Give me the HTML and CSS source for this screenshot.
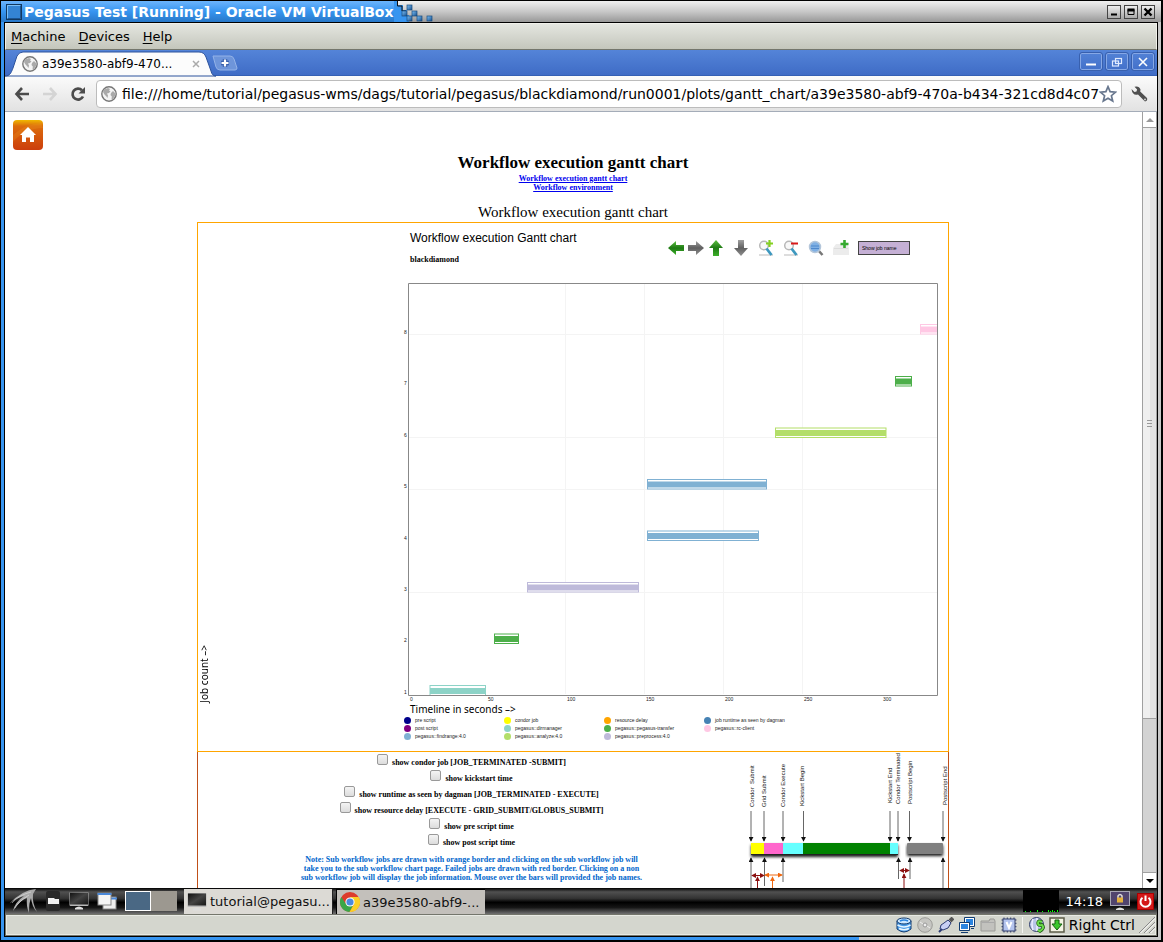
FILE: index.html
```html
<!DOCTYPE html>
<html lang="en">
<head>
<meta charset="utf-8">
<title>Pegasus Test [Running] - Oracle VM VirtualBox</title>
<link rel="stylesheet" href="styles.css">
</head>
<body>
<svg class="defs" width="0" height="0" aria-hidden="true">
  <defs>
    <linearGradient id="gGreen" x1="0" y1="0" x2="0" y2="1"><stop offset="0" stop-color="#5cc040"/><stop offset=".5" stop-color="#1f7a14"/><stop offset="1" stop-color="#3cb028"/></linearGradient>
    <linearGradient id="gGray" x1="0" y1="0" x2="0" y2="1"><stop offset="0" stop-color="#a0a0a0"/><stop offset=".5" stop-color="#606060"/><stop offset="1" stop-color="#909090"/></linearGradient>
    <linearGradient id="gHome" x1="0" y1="0" x2="0" y2="1"><stop offset="0" stop-color="#f0b800"/><stop offset=".2" stop-color="#dc6c0c"/><stop offset="1" stop-color="#cc3e0c"/></linearGradient>
    <linearGradient id="gScreen" x1="0" y1="0" x2="1" y2="1"><stop offset="0" stop-color="#111"/><stop offset=".5" stop-color="#444"/><stop offset="1" stop-color="#161616"/></linearGradient>
    <linearGradient id="gTile" x1="0" y1="0" x2="1" y2="1"><stop offset="0" stop-color="#7cc0f8"/><stop offset="1" stop-color="#164f8c"/></linearGradient>
    <symbol id="globe" viewBox="0 0 16 16"><circle cx="8" cy="8" r="7.2" fill="#f4f4f4" stroke="#777" stroke-width="1.4"/><path d="M3 3.5 7 2l2 1-1 1.5 1.5.8L8 7 6 7.500 7 9.500 6.500 12 5 10 3.500 8.500 2 6zM10 7l2-2 2 2v3l-2 3-1.500.5.3-3L9.500 9z" fill="#aaa"/></symbol>
    <symbol id="monitor" viewBox="0 0 20 20"><path d="M6 17q4-3 8 0v1.500H6z" fill="#ddd"/><rect x=".5" y="1" width="19" height="14" rx="1" fill="#b8b8b8"/><rect x="1" y="1.500" width="18" height="12" fill="url(#gScreen)"/></symbol>
  </defs>
</svg>
<div class="window">
  <header class="titlebar">
    <div class="title-left">
      <svg width="16" height="16" viewBox="0 0 16 16" aria-hidden="true"><rect x=".5" y=".5" width="15" height="15" fill="#3484d4" stroke="#12385f"/><path d="M1.500 14V1.500H14" fill="none" stroke="#7cc0f8"/><path d="M14.500 2v12.500H2" fill="none" stroke="#1c5490"/></svg>
      <h1 class="title">Pegasus Test [Running] - Oracle VM VirtualBox</h1>
    </div>
    <svg class="tiles" width="42" height="21" viewBox="0 0 42 21" aria-hidden="true">
      <path d="M0 0H3L4 4h5v5h4v5h2v7H0z" fill="#3795f0"/>
      <path d="M3.500 0v5H8v5h4v5" fill="none" stroke="#111" stroke-width="1"/>
      <g fill="url(#gTile)" stroke="#174a7c" stroke-width=".7"><rect x="13" y="4" width="5" height="5"/><rect x="8" y="10" width="5" height="5"/><rect x="18" y="10" width="5" height="5"/><rect x="13" y="15" width="5" height="5"/><rect x="23" y="15" width="5" height="5"/><rect x="33" y="15" width="5" height="5"/></g>
    </svg>
    <div class="win-buttons">
      <button class="wbtn" aria-label="Minimize"><svg viewBox="0 0 12 12"><path d="M3 8.500h6" stroke="#000" stroke-width="2"/></svg></button>
      <button class="wbtn" aria-label="Maximize"><svg viewBox="0 0 12 12"><path d="M3 3.500h6v5H3z" fill="none" stroke="#000"/><path d="M2.500 4h7" stroke="#000" stroke-width="3"/></svg></button>
      <button class="wbtn" aria-label="Close"><svg viewBox="0 0 12 12"><path d="M2.500 2.500l7 7M9.500 2.500l-7 7" stroke="#000" stroke-width="2.400"/></svg></button>
    </div>
  </header>
  <div class="screen">
    <nav class="menubar">
      <button><u>M</u>achine</button><button><u>D</u>evices</button><button><u>H</u>elp</button>
    </nav>
    <div class="tabstrip">
      <div class="tab">
        <svg class="tab-shape" width="208" height="25" viewBox="0 0 208 25" aria-hidden="true"><path d="M0 25C5 25 6 22 8 17L12 5Q14 1 18 1H194Q199 1 201 6L206 20Q207 25 211 25z" fill="#fcfcfc" stroke="#2c529c"/></svg>
        <svg class="i16" aria-hidden="true"><use href="#globe"/></svg>
        <span class="tab-text">a39e3580-abf9-470...</span>
        <button class="tab-close" aria-label="Close tab"><svg width="8" height="8" viewBox="0 0 8 8"><path d="M1 1l6 6M7 1L1 7" stroke="#aaa" stroke-width="1.500"/></svg></button>
      </div>
      <button class="newtab" aria-label="New tab"><svg width="26" height="16" viewBox="0 0 26 16"><path d="M1 1H18Q21 1 22 4l3 9q0 2-2 2H8Q5 15 4 12z" fill="#6e95da" stroke="#94b3e8"/><path d="M13 4v8M9 8h8" stroke="#3a62ae" stroke-width="4.500"/><path d="M13 4.500v7M9.500 8h7" stroke="#fff" stroke-width="2.200"/></svg></button>
      <div class="cbtns">
        <button class="cbtn" aria-label="Minimize browser"><svg width="20" height="14" viewBox="0 0 20 14"><path d="M5 9.500h10" stroke="#fff" stroke-width="2"/></svg></button>
        <button class="cbtn" aria-label="Restore browser"><svg width="20" height="14" viewBox="0 0 20 14" fill="none" stroke="#e0eaff" stroke-width="1.200"><rect x="8.500" y="3.500" width="6" height="5"/><rect x="5.500" y="6" width="6" height="5"/></svg></button>
        <button class="cbtn" aria-label="Close browser"><svg width="20" height="14" viewBox="0 0 20 14"><path d="M6 3l8 8M14 3l-8 8" stroke="#fff" stroke-width="1.600"/></svg></button>
      </div>
    </div>
    <div class="toolbar">
      <button aria-label="Back"><svg width="16" height="16" viewBox="0 0 16 16" fill="none" stroke="#4c4c4c" stroke-width="2.600"><path d="M8 2L2.500 8 8 14M3 8h12"/></svg></button>
      <button aria-label="Forward"><svg width="16" height="16" viewBox="0 0 16 16" fill="none" stroke="#d4d4d4" stroke-width="2.600"><path d="M8 2l5.500 6L8 14M13 8H1"/></svg></button>
      <button aria-label="Reload"><svg width="16" height="16" viewBox="0 0 16 16"><path d="M12 4.200A5.500 5.500 0 1 0 13 10.500" fill="none" stroke="#4c4c4c" stroke-width="2.700"/><path d="M15 1v6.500H8.500z" fill="#4c4c4c"/></svg></button>
      <div class="omnibox">
        <svg class="i16" aria-hidden="true"><use href="#globe"/></svg>
        <input type="text" aria-label="Address" value="file:///home/tutorial/pegasus-wms/dags/tutorial/pegasus/blackdiamond/run0001/plots/gantt_chart/a39e3580-abf9-470a-b434-321cd8d4c071">
        <button aria-label="Bookmark"><svg width="18" height="18" viewBox="0 0 18 18"><path d="M9 1.700l2.100 5 5.400.5-4.100 3.500 1.300 5.300L9 13.200 4.300 16l1.300-5.300L1.500 7.200l5.400-.5z" fill="#fff" stroke="#68778e" stroke-width="1.700"/></svg></button>
      </div>
      <button aria-label="Settings"><svg width="17" height="16" viewBox="0 0 17 16"><path d="M.5 3l3 3 2-.5.600-2L3.500.8Q8-.5 9.500 3.500l-.3 2L16 12q1 3-2 3.500L7 8.500Q1.500 10 .5 3z" fill="#505050"/><circle cx="14" cy="13.400" r=".9" fill="#ddd"/></svg></button>
    </div>
    <div class="viewport">
      <main class="page">
        <a class="home" href="#home" aria-label="Home"><svg width="30" height="30" viewBox="0 0 30 30"><rect width="30" height="30" rx="4" fill="url(#gHome)"/><path d="M0 15Q12 4 28 3L30 8Q12 8 0 22z" fill="#f09a20" opacity=".25"/><path d="M15 7l8 8h-2v7h-4v-4.500h-4V22H9v-7H7z" fill="#fff"/></svg></a>
        <h2 class="page-title">Workflow execution gantt chart</h2>
        <div class="links"><a href="#chart">Workflow execution gantt chart</a><br><a href="#env">Workflow environment</a></div>
        <h3 class="caption">Workflow execution gantt chart</h3>
        <section class="chart-box" id="chart">
          <div class="vlabel">Job count –&gt;</div>
          <div class="chart">
            <div class="chart-head">
              <div>
                <h4 class="chart-title">Workflow execution Gantt chart</h4>
                <div class="chart-sub">blackdiamond</div>
              </div>
              <div class="tools">
                <div class="pan">
                  <button aria-label="Pan left"><svg viewBox="0 0 16 16"><path d="M0 8l8-7v4h8v6H8v4z" fill="url(#gGreen)"/></svg></button>
                  <button aria-label="Pan right"><svg viewBox="0 0 16 16"><path d="M16 8L8 1v4H0v6h8v4z" fill="url(#gGray)"/></svg></button>
                  <button aria-label="Pan up"><svg viewBox="0 0 16 16"><path d="M8 0l7 8h-4v8H5V8H1z" fill="url(#gGreen)"/></svg></button>
                </div>
                <button aria-label="Pan down"><svg viewBox="0 0 16 16"><path d="M8 16l7-8h-4V0H5v8H1z" fill="url(#gGray)"/></svg></button>
                <button aria-label="Zoom in"><svg viewBox="0 0 16 16"><path d="M1 15h14" stroke="#bbb"/><circle cx="6" cy="5.500" r="4.300" fill="#f8f8f8" stroke="#b8b8b8" stroke-width="1.500"/><path d="M8.500 8.500l5 6.500" stroke="#3d98bf" stroke-width="2.800"/><path d="M11.500 0v7M8 3.500h7" stroke="#84d020" stroke-width="2.200"/></svg></button>
                <button aria-label="Zoom out"><svg viewBox="0 0 16 16"><path d="M1 15h14" stroke="#bbb"/><circle cx="6" cy="5.500" r="4.300" fill="#f8f8f8" stroke="#b8b8b8" stroke-width="1.500"/><path d="M8.500 8.500l5 6.500" stroke="#3d98bf" stroke-width="2.800"/><path d="M8 3.500h7" stroke="#d81818" stroke-width="2"/></svg></button>
                <button aria-label="Reset zoom"><svg viewBox="0 0 16 16"><path d="M10 10l4.500 5" stroke="#777" stroke-width="2.600"/><circle cx="7" cy="7" r="5.500" fill="#7fb0e4" stroke="#b4c6da" stroke-width="1.500"/><path d="M3 6h8M3 8.500h8" stroke="#4f88cc"/></svg></button>
                <button aria-label="Add"><svg viewBox="0 0 16 16"><path d="M0 8l3-4h11l2 4v7H0z" fill="#ececec"/><path d="M1 8.500h14" stroke="#ddd"/><path d="M11.500 0v8M7.500 4h8" stroke="#36aa30" stroke-width="2.600"/></svg></button>
                <button class="jobname">Show job name</button>
              </div>
            </div>
            <svg class="plot" viewBox="0 0 542 423" role="img" aria-label="Gantt chart of eight jobs">
              <g stroke="#f4f4f4"><path d="M165.500 4v410M244.500 4v410M323.500 4v410M402.500 4v410M9 54.500h528M9 157.500h528M9 209.500h528M9 312.500h528" /></g>
              <g class="bars">
                <g fill="#8dd3c7" stroke="#8dd3c7"><rect x="30" y="405.500" width="55.500" height="10"/><rect x="30" y="408" width="55.500" height="6"/></g>
                <g fill="#4daf4a" stroke="#4daf4a"><rect x="94.500" y="354" width="24" height="9.500"/><rect x="94.500" y="356" width="24" height="6"/></g>
                <g fill="#bebada" stroke="#bebada"><rect x="127.500" y="302.500" width="111" height="9.500"/><rect x="128" y="304.500" width="110.500" height="6"/></g>
                <g fill="#80b1d3" stroke="#80b1d3"><rect x="247.500" y="251" width="111" height="9.500"/><rect x="247.500" y="253" width="111" height="6"/><rect x="247.500" y="199.500" width="119" height="9.500"/><rect x="247.500" y="201.500" width="119" height="6"/></g>
                <g fill="#b3de69" stroke="#b3de69"><rect x="375.500" y="148" width="110.500" height="9.500"/><rect x="375.500" y="150" width="110.500" height="6"/></g>
                <g fill="#4daf4a" stroke="#4daf4a"><rect x="495.500" y="96.500" width="16" height="9.500"/><rect x="495.500" y="98.500" width="16" height="6"/></g>
                <g fill="#ffc8e4" stroke="#ffc8e4"><rect x="520.500" y="44.500" width="17" height="9.500"/><rect x="520.500" y="46.500" width="17" height="6"/></g>
              </g>
              <path d="M8.500 3.500h529v412H8.500z" fill="none" stroke="#888"/>
              <g class="tick"><text x="4" y="54">8</text><text x="4" y="105">7</text><text x="4" y="157">6</text><text x="4" y="208">5</text><text x="4" y="260">4</text><text x="4" y="311">3</text><text x="4" y="362">2</text><text x="4" y="414">1</text>
              <text x="10" y="421">0</text><text x="88" y="421">50</text><text x="167" y="421">100</text><text x="246" y="421">150</text><text x="325" y="421">200</text><text x="404" y="421">250</text><text x="483" y="421">300</text></g>
            </svg>
            <div class="xlabel">Timeline in seconds –&gt;</div>
            <ul class="legend">
              <li class="c-pre">pre script</li><li class="c-condor">condor job</li><li class="c-delay">resource delay</li><li class="c-run">job runtime as seen by dagman</li>
              <li class="c-post">post script</li><li class="c-dir">pegasus::dirmanager</li><li class="c-transfer">pegasus::pegasus-transfer</li><li class="c-rc">pegasus::rc-client</li>
              <li class="c-find">pegasus::findrange:4.0</li><li class="c-analyze">pegasus::analyze:4.0</li><li class="c-prep">pegasus::preprocess:4.0</li>
            </ul>
          </div>
        </section>
        <section class="options-box">
          <form class="options">
            <label><input type="checkbox">show condor job [JOB_TERMINATED -SUBMIT]</label>
            <label><input type="checkbox">show kickstart time</label>
            <label><input type="checkbox">show runtime as seen by dagman [JOB_TERMINATED - EXECUTE]</label>
            <label><input type="checkbox">show resource delay [EXECUTE - GRID_SUBMIT/GLOBUS_SUBMIT]</label>
            <label><input type="checkbox">show pre script time</label>
            <label><input type="checkbox">show post script time</label>
            <p class="note">Note: Sub workflow jobs are drawn with orange border and clicking on the sub workflow job will<br>take you to the sub workflow chart page. Failed jobs are drawn with red border. Clicking on a non<br>sub workflow job will display the job information. Mouse over the bars will provided the job names.</p>
          </form>
          <svg class="timeline" width="203" height="200" viewBox="0 0 203 200" role="img" aria-label="Job timeline">
            <defs>
              <marker id="ab" viewBox="0 0 6 6" refX="5" refY="3" markerWidth="5" markerHeight="5" markerUnits="userSpaceOnUse" orient="auto-start-reverse"><path d="M0 0l6 3-6 3z" fill="#111"/></marker>
              <marker id="ar" viewBox="0 0 6 6" refX="5" refY="3" markerWidth="5" markerHeight="5" markerUnits="userSpaceOnUse" orient="auto-start-reverse"><path d="M0 0l6 3-6 3z" fill="#8c1010"/></marker>
              <marker id="ao" viewBox="0 0 6 6" refX="5" refY="3" markerWidth="5" markerHeight="5" markerUnits="userSpaceOnUse" orient="auto-start-reverse"><path d="M0 0l6 3-6 3z" fill="#f06810"/></marker>
              <filter id="sh" x="-5%" y="-40%" width="112%" height="220%"><feDropShadow dx="0" dy="2" stdDeviation="1.500" flood-color="#000" flood-opacity=".9"/></filter>
            </defs>
            <g filter="url(#sh)"><rect x="6" y="91" width="147" height="12" fill="#222"/></g>
            <path d="M6 91h13v11H6z" fill="#ff0"/><path d="M19 91h19v11H19z" fill="#f6c"/><path d="M38 91h20v11H38zM145 91h8v11h-8z" fill="#6ff"/><path d="M58 91h87v11H58z" fill="#008200"/>
            <rect x="162" y="91" width="36" height="11" rx="1" fill="#808080" filter="url(#sh)"/>
            <g stroke="#666" fill="none" marker-end="url(#ab)"><path d="M6 59v30"/><path d="M19 59v30"/><path d="M38 59v30"/><path d="M58.500 59v30"/><path d="M145 59v30"/><path d="M153 59v30"/><path d="M164.500 59v30"/><path d="M198 59v30"/>
            <path d="M6 180v-74"/><path d="M19.500 134v-28"/><path d="M38 130v-24"/><path d="M153.500 127v-21"/><path d="M165 127v-21"/><path d="M198 180v-74"/></g>
            <g stroke="#8c1010" fill="none"><path d="M7 123.500h12" marker-start="url(#ar)" marker-end="url(#ar)"/><path d="M155 118.500h9" marker-start="url(#ar)" marker-end="url(#ar)"/><path d="M12.500 180v-55" marker-end="url(#ar)"/><path d="M159 180v-58" marker-end="url(#ar)"/></g>
            <g stroke="#f06810" fill="none"><path d="M20 123h17" marker-start="url(#ao)" marker-end="url(#ao)"/><path d="M27.500 180v-55" marker-end="url(#ao)"/></g>
            <g class="events"><text transform="translate(9 55) rotate(-90)">Condor &#160;Submit</text><text transform="translate(21 55) rotate(-90)">Grid Submit</text><text transform="translate(40 55) rotate(-90)">Condor Execute</text><text transform="translate(59 54) rotate(-90)">Kickstart Begin</text><text transform="translate(147 51) rotate(-90)">Kickstart End</text><text transform="translate(155 52) rotate(-90)">Condor Terminated</text><text transform="translate(167 52) rotate(-90)">Postscript Begin</text><text transform="translate(202 53) rotate(-90)">Postscript End</text></g>
          </svg>
        </section>
      </main>
      <div class="scrollbar" aria-hidden="true">
        <span class="arrow up"></span><span class="thumb"><i></i></span><span class="trough"></span><span class="arrow down"></span>
      </div>
    </div>
    <footer class="taskbar">
      <div class="launch">
        <button aria-label="Start menu"><svg width="28" height="24" viewBox="0 0 28 24"><path d="M27 0Q13 1 0 15q9-7 15-8Q6 13 4 22 11 11 18 9q-1 8 2 15Q20 13 22 9q1 9 6 14Q23 14 24 5z" fill="#aaa"/><path d="M22 3Q10 6 3 14M20 6Q9 13 6 19" stroke="#eee" stroke-width=".5" fill="none"/></svg></button>
        <button aria-label="File manager"><svg width="16" height="22" viewBox="0 0 16 22"><rect x="1" y="1" width="14" height="20" rx="2" fill="#2a2a2a"/><path d="M3 8h6l1 1h4v5H3z" fill="#f2f2f2"/></svg></button>
        <button aria-label="Terminal"><svg width="20" height="20"><use href="#monitor"/></svg></button>
        <button aria-label="Show windows"><svg width="20" height="20" viewBox="0 0 20 20"><rect x="6" y="6" width="13" height="12" fill="#eee" stroke="#888"/><path d="M6 7.500h14" stroke="#4a88d8" stroke-width="2"/><rect x="1" y="2" width="13" height="12" fill="#f4f4f4" stroke="#888"/><path d="M.5 3h14" stroke="#4a88d8" stroke-width="2"/></svg></button>
        <div class="desks"><button class="desk on" aria-label="Desktop 1"></button><button class="desk" aria-label="Desktop 2"></button></div>
      </div>
      <button class="task"><svg width="20" height="20" aria-hidden="true"><use href="#monitor"/></svg><span>tutorial@pegasu...</span></button>
      <button class="task active"><svg width="20" height="20" viewBox="0 0 20 20" aria-hidden="true"><circle cx="10" cy="10" r="10" fill="#dd3c2c"/><path d="M1.300 5A10 10 0 0 0 9.500 20L14 12H6z" fill="#3aa648"/><path d="M18.700 5H10l4 7-4.500 8A10 10 0 0 0 18.700 5z" fill="#fbd025"/><circle cx="10" cy="10" r="4.600" fill="#fff"/><circle cx="10" cy="10" r="3.600" fill="#4a8ade"/></svg><span>a39e3580-abf9-...</span></button>
      <div class="tray">
        <svg width="36" height="22" viewBox="0 0 36 22" aria-hidden="true"><path d="M0 0h36v22H0z" fill="#000"/><path d="M2.500 22v-1M7.500 22v-1M14.500 22v-2M19.500 22v-1M25.500 22v-2M27.500 22v-1M29.500 22v-2M31.500 22v-1M34.500 22v-2" stroke="#0f0"/></svg>
        <time>14:18</time>
        <svg width="20" height="20" viewBox="0 0 20 20" role="img" aria-label="Lock screen"><path d="M6 18q4-3 8 0v1H6z" fill="#ddd"/><rect x=".5" y=".5" width="19" height="14" fill="#51456e" stroke="#a8a8b4"/><path d="M8 7V5q2-3 4 0v2" fill="none" stroke="#ddd" stroke-width="1.500"/><rect x="7" y="6.500" width="6" height="5" fill="#e4b23c"/></svg>
        <button aria-label="Log out"><svg width="17" height="17" viewBox="0 0 17 17"><rect x=".5" y=".5" width="16" height="16" fill="#d41818" stroke="#a00"/><path d="M5.500 4.700a5 5 0 1 0 6 0M8.500 2.500v5.500" stroke="#fff" stroke-width="2" fill="none"/></svg></button>
      </div>
    </footer>
    <div class="statusbar">
      <div class="status-icons">
        <svg viewBox="0 0 16 16"><path d="M1 4v8q7 6 14 0V4z" fill="#4a9ce8" stroke="#123c70"/><ellipse cx="8" cy="4" rx="7" ry="3" fill="#cde8ff" stroke="#123c70"/><path d="M4 4q4-2 8 0" stroke="#2a84e0" stroke-width="1.500" fill="none"/><path d="M1.500 8q6.500 4 13 0M3 11.500q5 2.500 10 0" stroke="#e8f6ff" stroke-width="1.500" fill="none"/></svg>
        <svg viewBox="0 0 16 16"><circle cx="8" cy="8" r="7.300" fill="#c6c6c2" stroke="#9c9c98"/><circle cx="8" cy="8" r="2" fill="#eee" stroke="#999"/><path d="M3 5l3 2M10 9l3 2" stroke="#eee"/></svg>
        <svg viewBox="0 0 16 16"><path d="M15 1l-3 3" stroke="#555" stroke-width="4"/><path d="M6 6l4-3 3 3-3 5-5 2-3-1 1-4z" fill="#c8d0f4" stroke="#2c3c74"/><path d="M1 15l3-3" stroke="#2c3c74" stroke-width="2"/></svg>
        <svg viewBox="0 0 16 16"><rect x="6.500" y="1.500" width="8" height="7" fill="#2a84e0" stroke="#fff"/><path d="M5.500 5V.5h10v9H11" fill="none" stroke="#123c70"/><rect x="1.500" y="6.500" width="8" height="6" fill="#2a84e0" stroke="#fff"/><path d="M.5 5.500h10v8H.5zM2 15.500h7M12 11.500h3" fill="none" stroke="#123c70"/></svg>
        <svg viewBox="0 0 16 16"><path d="M1 14V4h8l1-2h4l1 2v10z" fill="#c2c2be" stroke="#9a9a96"/><path d="M1.500 5.500h13" stroke="#aaa"/></svg>
        <svg viewBox="0 0 16 16"><path d="M3 .5v15M6.300.5v15M9.700.5v15M13 .5v15M.5 3h15M.5 6.300h15M.5 9.700h15M.5 13h15" stroke="#34406c"/><rect x="2" y="2" width="12" height="12" fill="#b4c4ee" stroke="#34406c"/><path d="M5.500 5L8 11l2.500-6" stroke="#fff" stroke-width="2" fill="none"/></svg>
      </div>
      <div class="status-host">
        <svg viewBox="0 0 16 16"><circle cx="7.500" cy="7.500" r="7" fill="#b8c4e8" stroke="#34406c"/><path d="M8 1v13M4 2q-2 5 0 11" stroke="#eef" stroke-width="1.500" fill="none"/><path d="M13 5q-4-2-4 1t4 2q3 3-2 6l-2-1" stroke="#1c5c10" stroke-width="3.500" fill="none"/><path d="M13 5q-4-2-4 1t4 2q3 3-2 6l-2-1" stroke="#6cdc4c" stroke-width="2" fill="none"/></svg>
        <svg viewBox="0 0 16 16"><rect x="1" y="1" width="14" height="14" fill="#f4f4e4" stroke="#5c5c48" stroke-width="1.500"/><path d="M6 3h4v4h3l-5 6-5-6h3z" fill="#3cc82c" stroke="#146010"/></svg>
        <span>Right Ctrl</span>
        <svg viewBox="0 0 16 16"><path d="M0 16L16 0M5 16L16 5M10 16l6-6" stroke="#888"/><path d="M1.500 16L16 1.500M6.500 16L16 6.500M11.500 16l4.500-4.500" stroke="#fff"/></svg>
      </div>
    </div>
  </div>
</div>
</body>
</html>
```
FILE: styles.css
```css
* { box-sizing: border-box; }
body {
  margin: 0;
  height: 100vh;
  padding: 1px 2px 2px 1px;
  background: #000;
  color: #000;
  font-family: "DejaVu Sans", sans-serif;
  font-size: 13px;
  overflow: hidden;
}
button { border: 0; padding: 0; background: none; font: inherit; color: inherit; }
h1, h2, h3, h4, p, ul { margin: 0; padding: 0; }
svg { display: block; flex: none; }
.defs { position: absolute; }
.i16 { width: 16px; height: 16px; }

.window {
  height: 100%;
  display: flex;
  flex-direction: column;
  padding: 0 3px 3px;
  background: linear-gradient(90deg, #3795f0 0 74%, #c8c8c8 74%);
}
.titlebar {
  display: flex;
  align-items: center;
  height: 21px;
  flex: none;
  margin: 0 -3px;
  background: linear-gradient(#f0f0f0, #c8c8c8 50%, #989898);
}
.title-left {
  display: flex;
  align-items: center;
  gap: 2px;
  height: 21px;
  padding-left: 5px;
  background: linear-gradient(#6cb4fc, #3795f0 50%, #2878c8);
}
.title { font-size: 14px; line-height: 20px; color: #fff; white-space: nowrap; }
.win-buttons { display: flex; gap: 3px; margin-left: auto; padding-right: 6px; }
.wbtn { width: 14px; height: 14px; border: 1px solid #444; background: linear-gradient(#eee, #aaa); }
.wbtn svg { width: 12px; height: 12px; }

.screen { flex: 1; min-height: 0; display: flex; flex-direction: column; border: 1px solid #000; }
.menubar {
  display: flex;
  gap: 13px;
  height: 27px;
  flex: none;
  padding-left: 5px;
  font-size: 13px;
  background: linear-gradient(#e4e6e0, #c4c6bc);
  border: 1px solid #f0f0ea;
  border-bottom: 1px solid #74766c;
}
.menubar u { text-underline-offset: 2px; }

.tabstrip { display: flex; height: 26px; flex: none; background: linear-gradient(#5484d8, #3f6cc6); border-bottom: 1px solid #3460b4; }
.tab { position: relative; display: flex; align-items: center; width: 207px; padding: 2px 0 0 17px; }
.tab > * { position: relative; }
.tab .tab-shape { position: absolute; left: 0; top: 1px; overflow: visible; }
.tab-text { margin-left: 4px; font-size: 12px; }
.tab-close { margin: 0 12px 0 auto; }
.newtab { align-self: center; }
.cbtns { display: flex; gap: 4px; margin: 3px 3px 0 auto; }
.cbtn { width: 22px; height: 17px; border: 1px solid #86a8e6; border-radius: 2px; outline: 1px solid #3860ae; }

.toolbar {
  display: flex;
  align-items: center;
  gap: 12px;
  height: 36px;
  flex: none;
  padding: 0 9px;
  background: linear-gradient(#fbfbfb, #e2e2e2);
  border-bottom: 1px solid #a4acb8;
}
.omnibox {
  flex: 1;
  min-width: 0;
  margin: 0 -3px 0 -2px;
  display: flex;
  align-items: center;
  height: 28px;
  padding: 0 4px;
  background: #fff;
  border: 1px solid #bcbcbc;
  border-radius: 4px;
}
.omnibox input { flex: 1; min-width: 0; margin-left: 5px; padding: 0; border: 0; outline: 0; background: none; font: 14px "DejaVu Sans", sans-serif; }

.viewport { flex: 1; min-height: 0; display: flex; background: #fff; }
.page { flex: 1; min-width: 0; padding: 8px 9px 8px 8px; overflow: hidden; display: flex; flex-direction: column; align-items: center; font-family: "Liberation Serif", serif; }
.page > * { flex: none; }
.home { align-self: flex-start; }
.page-title { margin-top: 3px; font-size: 17px; line-height: 20px; }
.links { margin-top: 1px; font-size: 8px; line-height: 9px; font-weight: bold; text-align: center; }
.links a { color: #0000ee; }
.caption { margin-top: 10px; font-size: 15px; line-height: 20px; font-weight: normal; }

.chart-box, .options-box { display: flex; width: 67%; min-width: 752px; border: 1px solid #ffa500; }
.vlabel {
  flex: none;
  align-self: flex-end;
  width: 12px;
  margin: 0 0 48px;
  font: 10px/12px "Noto Sans", sans-serif;
  writing-mode: vertical-rl;
  transform: rotate(180deg);
}
.chart { flex: 1; margin-left: 190px; padding-bottom: 11px; }
.chart-head { display: grid; grid-template-columns: 258px auto; justify-content: start; height: 57px; padding: 7px 0 0 10px; }
.chart-title { font: 12px/16px "Liberation Sans", sans-serif; }
.chart-sub { margin-top: 8px; font-size: 8px; line-height: 12px; font-weight: bold; }
.tools { display: flex; align-items: center; align-self: start; gap: 9px; padding-top: 10px; }
.tools button svg { width: 16px; height: 16px; }
.pan { display: flex; gap: 4px; }
.tools .jobname {
  width: 52px;
  height: 14px;
  border: 1px solid #444;
  background: #c5b0d5;
  text-align: left;
  padding-left: 3px;
  font: 5px/12px "Liberation Sans", sans-serif;
  white-space: nowrap;
}
.plot { width: 100%; max-width: 542px; height: auto; }
.bars rect:nth-child(odd) { fill: #fff; }
.bars rect:nth-child(even) { stroke: none; }
.tick { font: 5px "Liberation Sans", sans-serif; fill: #222; }
.xlabel { padding-left: 10px; font: 10px/12px "Noto Sans", sans-serif; }
.legend {
  display: grid;
  grid-template-columns: repeat(5, 100px);
  grid-auto-rows: 8px;
  margin: 1px 0 0 4px;
  list-style: none;
  font: 5px/8px "Liberation Sans", sans-serif;
  white-space: nowrap;
}
.legend li { display: flex; align-items: center; gap: 4px; }
.legend li:nth-child(4n+1) { grid-column: 1; }
.legend li::before { content: ""; width: 7px; height: 7px; border-radius: 50%; background: currentColor; }
.legend li { -webkit-text-fill-color: #222; }
.c-pre { color: #00008b; } .c-condor { color: #ffff00; } .c-delay { color: #ffa500; } .c-run { color: #4682b4; }
.c-post { color: #800080; } .c-dir { color: #8dd3c7; } .c-transfer { color: #4daf4a; } .c-rc { color: #ffc8e4; }
.c-find { color: #80b1d3; } .c-analyze { color: #b3de69; } .c-prep { color: #bebada; }

.options-box { border-color: #c05018; border-top: 0; justify-content: space-between; }
.options { flex: 1; display: flex; flex-direction: column; align-items: center; font-size: 8px; font-weight: bold; }
.options label { display: flex; align-items: center; height: 16px; line-height: 16px; padding-top: 6px; white-space: nowrap; }
.options input {
  appearance: none;
  width: 11px;
  height: 11px;
  margin: -8px 4px 0 0;
  border: 1px solid #999;
  border-radius: 2px;
  background: linear-gradient(#f4f4f4, #dcdcdc);
}
.note { margin-top: 7px; line-height: 9px; font-size: 8px; color: #0066cc; text-align: center; white-space: nowrap; }
.timeline { flex: none; }
.events { font: 6px "Liberation Sans", sans-serif; fill: #111; }

.scrollbar { width: 15px; flex: none; display: flex; flex-direction: column; border-left: 1px solid #a0a0a0; border-right: 1px solid #a0a0a0; background: #d3d3d3; }
.arrow { height: 15px; display: grid; place-items: center; background: #fff; }
.arrow::before { content: ""; border: solid transparent; border-width: 0 4px 4px; border-bottom-color: #999; }
.arrow.down::before { border-width: 4px 4px 0; border-top-color: #000; }
.thumb { flex: 592; display: grid; place-items: center; border: solid #a0a0a0; border-width: 1px 0; background: linear-gradient(90deg, #efefef 55%, #e2e2e2 55%); }
.thumb i { width: 5px; height: 7px; background: repeating-linear-gradient(#999 0 1px, transparent 1px 3px); }
.trough { flex: 153; border-bottom: 1px solid #a0a0a0; }

.taskbar { display: flex; align-items: center; height: 26px; flex: none; background: linear-gradient(#000, #505050 15%, #333 40%, #000 55%, #161616 75%, #707070); color: #fff; }
.launch { display: flex; align-items: center; gap: 8px; padding-left: 4px; width: 179px; flex: none; }
.desks { display: flex; }
.desk { width: 26px; height: 20px; background: #9c9890; }
.desk.on { background: #4a6884; border: 1px solid #fff; }
.task { display: flex; align-items: center; gap: 3px; width: 149px; height: 25px; align-self: end; padding-left: 3px; color: #111; font-size: 13px; background: #dcdad5; border-right: 1px solid #222; }
.task.active { margin-left: 3px; background: #c3c0bb; border: solid #000; border-width: 1px 0 0 1px; }
.tray { display: flex; align-items: center; gap: 7px; margin-left: auto; padding-right: 3px; font-size: 13px; }

.statusbar { display: flex; align-items: center; justify-content: flex-end; height: 22px; flex: none; padding-right: 1px; background: #d4d6ce; border: 1px solid #74766c; outline: 1px solid #e8eae4; outline-offset: -2px; font-size: 14px; }
.status-icons, .status-host { display: flex; align-items: center; gap: 5px; }
.status-icons { padding-right: 5px; margin-right: 6px; border-right: 1px solid #f4f4f0; }
.status-host { gap: 4px; }
.statusbar svg { width: 16px; height: 16px; }
```
